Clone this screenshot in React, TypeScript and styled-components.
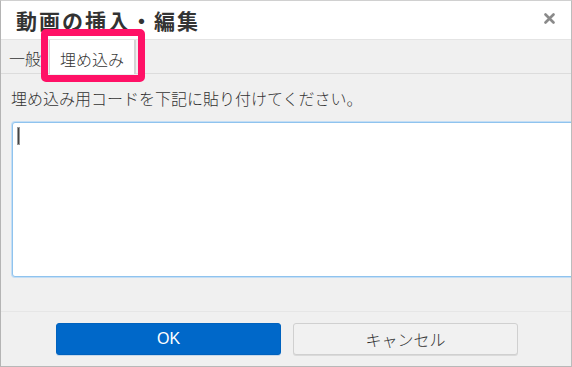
import React from 'react';
import styled, { createGlobalStyle } from 'styled-components';

const GlobalStyle = createGlobalStyle`
    html, body {
        margin: 0;
        padding: 0;
        background: #ffffff;
    }
    body {
        font-family: 'Noto Sans CJK JP', 'Liberation Sans', sans-serif;
    }
`;

const App = () => {
    return (
        <>
            <GlobalStyle />
            <Dialog>
                <Header>
                    <Title>動画の挿入・編集</Title>
                    <CloseButton aria-label="close">
                        <svg width="11" height="11" viewBox="0 0 11 11">
                            <path
                                d="M1.5 1.5 L9.5 9.5 M9.5 1.5 L1.5 9.5"
                                stroke="#8a8a8a"
                                strokeWidth="2.6"
                                strokeLinecap="round"
                            />
                        </svg>
                    </CloseButton>
                </Header>
                <TabBar>
                    <Tab>一般</Tab>
                    <Tab $active>
                        埋め込み
                        <Highlight />
                    </Tab>
                </TabBar>
                <Body>
                    <Label>埋め込み用コードを下記に貼り付けてください。</Label>
                    <Editor>
                        <Caret />
                    </Editor>
                </Body>
                <Footer>
                    <Button $primary>OK</Button>
                    <Button>キャンセル</Button>
                </Footer>
            </Dialog>
        </>
    );
};

const Dialog = styled.div`
    width: 572px;
    height: 367px;
    box-sizing: border-box;
    border: 1px solid #d0d0d0;
    border-left-color: #b4b4b4;
    border-bottom-color: #b8b8b8;
    border-right-color: #bcbcbc;
    background: #f0f0f0;
    display: flex;
    flex-direction: column;
    overflow: hidden;
`;

const Header = styled.div`
    height: 38px;
    background: #ffffff;
    display: flex;
    align-items: center;
    justify-content: space-between;
    padding: 0 14px 0 15px;
    border-bottom: 1px solid #e4e4e4;
    flex-shrink: 0;
`;

const Title = styled.h1`
    margin: 0;
    font-size: 21px;
    font-weight: 700;
    color: #333333;
    letter-spacing: 2px;
    line-height: 1;
`;

const CloseButton = styled.div`
    display: flex;
    align-items: center;
    justify-content: center;
    width: 16px;
    height: 16px;
    margin-top: -4px;
`;

const TabBar = styled.div`
    height: 33px;
    display: flex;
    align-items: flex-end;
    border-bottom: 1px solid #dcdcdc;
    padding-left: 8px;
    flex-shrink: 0;
`;

const Tab = styled.div<{ $active?: boolean }>`
    position: relative;
    height: ${(p) => (p.$active ? '34px' : '33px')};
    margin-bottom: ${(p) => (p.$active ? '-1px' : '0')};
    box-sizing: border-box;
    display: flex;
    align-items: center;
    padding: ${(p) => (p.$active ? '3px 10px 0 10px' : '3px 8px 0 0')};
    font-size: 16px;
    font-weight: 300;
    color: #333333;
    background: ${(p) => (p.$active ? '#ffffff' : 'transparent')};
    border-left: ${(p) => (p.$active ? '1px solid #d4d4d4' : 'none')};
    border-right: ${(p) => (p.$active ? '2px solid #d4d4d4' : 'none')};
`;

const Highlight = styled.span`
    position: absolute;
    left: -9px;
    top: -11px;
    width: 104px;
    height: 53px;
    box-sizing: border-box;
    border: 7px solid #ff1166;
    border-radius: 5px;
    pointer-events: none;
`;

const Body = styled.div`
    flex: 1;
    padding: 13px 0 0 10px;
    display: flex;
    flex-direction: column;
    border-bottom: 1px solid #e6e6e6;
`;

const Label = styled.div`
    font-size: 16px;
    font-weight: 300;
    color: #333333;
    line-height: 22px;
`;

const Editor = styled.div`
    margin-top: 13px;
    margin-left: 1px;
    width: 580px;
    height: 155px;
    box-sizing: border-box;
    background: #ffffff;
    border: 1px solid #8fc3ee;
    border-radius: 3px;
    box-shadow: 0 0 0 1px #c4def5;
    padding: 4px 0 0 4px;
`;

const Caret = styled.span`
    display: block;
    width: 1px;
    height: 16px;
    background: #444444;
    border: 1px solid #999999;
`;

const Footer = styled.div`
    height: 54px;
    flex-shrink: 0;
    display: flex;
    align-items: flex-start;
    padding: 11px 0 0 55px;
    gap: 12px;
    box-sizing: border-box;
`;

const Button = styled.div<{ $primary?: boolean }>`
    width: 225px;
    height: 32px;
    box-sizing: border-box;
    display: flex;
    align-items: center;
    justify-content: center;
    font-size: 16px;
    font-weight: 300;
    font-family: 'Liberation Sans', 'Noto Sans CJK JP', sans-serif;
    border-radius: 3px;
    color: ${(p) => (p.$primary ? '#ffffff' : '#333333')};
    background: ${(p) => (p.$primary ? '#0068c9' : '#f1f1f1')};
    border: 1px solid ${(p) => (p.$primary ? '#0062be' : '#d0d0d0')};
    box-shadow: ${(p) => (p.$primary ? '0 1px 0 #c7d8ea' : '0 1px 0 #dadada')};
`;

export default App;
